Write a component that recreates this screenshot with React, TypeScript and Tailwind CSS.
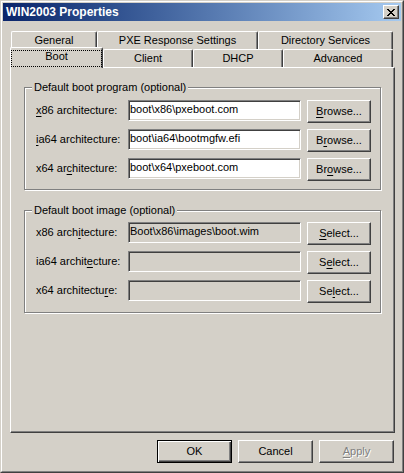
import React from "react";

// classic 3D edges
const raised =
  "border border-t-white border-l-white border-r-[#404040] border-b-[#404040] shadow-[inset_-1px_-1px_#808080]";
const sunken =
  "border border-t-[#808080] border-l-[#808080] border-r-white border-b-white shadow-[inset_1px_1px_#404040,inset_-1px_-1px_#d4d0c8]";

type Mnemonic = { text: string; at: number };

function Accel({ text, at }: Mnemonic) {
  return (
    <>
      {text.slice(0, at)}
      <span className="underline underline-offset-[2px]">{text[at]}</span>
      {text.slice(at + 1)}
    </>
  );
}

function CloseGlyph() {
  return (
    <svg width="8" height="7" viewBox="0 0 8 7" shapeRendering="crispEdges">
      <path
        d="M0 0h2v1H0zM6 0h2v1H6zM1 1h2v1H1zM5 1h2v1H5zM2 2h4v1H2zM3 3h2v1H3zM2 4h4v1H2zM1 5h2v1H1zM5 5h2v1H5zM0 6h2v1H0zM6 6h2v1H6z"
        fill="#000"
      />
    </svg>
  );
}

const backTabs = [
  { label: "General", w: "w-[86px]" },
  { label: "PXE Response Settings", w: "w-[161px]" },
  { label: "Directory Services", w: "w-[135px]" },
];

const frontTabs = [
  { label: "Client", w: "w-[90px]" },
  { label: "DHCP", w: "w-[90px]" },
  { label: "Advanced", w: "w-[110px]" },
];

function Tab({ label, w }: { label: string; w: string }) {
  return (
    <div
      className={`flex h-[18px] shrink-0 items-center justify-center rounded-t-[2px] border border-b-0 border-t-white border-l-white border-r-[#404040] leading-[13px] shadow-[inset_-1px_0_#808080] ${w}`}
    >
      {label}
    </div>
  );
}

type FieldRow = {
  label: Mnemonic;
  value: string;
  button: Mnemonic;
};

const programRows: FieldRow[] = [
  { label: { text: "x86 architecture:", at: 0 }, value: "boot\\x86\\pxeboot.com", button: { text: "Browse...", at: 0 } },
  { label: { text: "ia64 architecture:", at: 0 }, value: "boot\\ia64\\bootmgfw.efi", button: { text: "Browse...", at: 1 } },
  { label: { text: "x64 architecture:", at: 6 }, value: "boot\\x64\\pxeboot.com", button: { text: "Browse...", at: 2 } },
];

const imageRows: FieldRow[] = [
  { label: { text: "x86 architecture:", at: 8 }, value: "Boot\\x86\\images\\boot.wim", button: { text: "Select...", at: 0 } },
  { label: { text: "ia64 architecture:", at: 11 }, value: "", button: { text: "Select...", at: 1 } },
  { label: { text: "x64 architecture:", at: 14 }, value: "", button: { text: "Select...", at: 2 } },
];

function GroupBox({
  title,
  rows,
  readOnly,
  className,
}: {
  title: string;
  rows: FieldRow[];
  readOnly?: boolean;
  className: string;
}) {
  return (
    <div
      className={`relative ml-[13px] h-[103px] w-[357px] border border-[#808080] shadow-[inset_1px_1px_#fff,1px_1px_#fff] ${className}`}
    >
      <span className="absolute -top-[7px] left-[7px] bg-[#d4d0c8] px-[2px] leading-[13px]">
        {title}
      </span>
      <div className="flex flex-col gap-[6px] pl-[11px]">
        {rows.map((r) => (
          <div key={r.label.text} className="flex h-[23px] items-start">
            <label className="w-[92px] shrink-0 leading-[21px]">
              <Accel {...r.label} />
            </label>
            <input
              readOnly
              defaultValue={r.value}
              className={`h-[21px] w-[173px] pb-[3px] pl-[1px] text-[11px] leading-[13px] text-black outline-none ${sunken} ${
                readOnly ? "bg-[#d4d0c8]" : "bg-white"
              }`}
            />
            <button
              type="button"
              className={`ml-[6px] h-[23px] w-[64px] bg-[#d4d0c8] leading-[13px] ${raised}`}
            >
              <Accel {...r.button} />
            </button>
          </div>
        ))}
      </div>
    </div>
  );
}

export default function App() {
  return (
    <div className="h-[473px] w-[404px] border border-t-[#d4d0c8] border-l-[#d4d0c8] border-r-[#404040] border-b-[#404040] bg-[#d4d0c8] font-['Liberation_Sans',Arial,sans-serif] text-[11px] text-black">
      <div className="h-full border border-t-white border-l-white border-r-[#808080] border-b-[#808080] p-[1px]">
        {/* caption bar */}
        <div className="flex h-[18px] items-center bg-linear-to-r from-[#0a246a] to-[#a6caf0] pl-[3px] pr-[2px]">
          <span className="text-[12px] font-bold leading-none text-white">WIN2003 Properties</span>
          <button
            type="button"
            className={`ml-auto flex h-[14px] w-[16px] items-center justify-center bg-[#d4d0c8] ${raised}`}
          >
            <CloseGlyph />
          </button>
        </div>

        <div className="px-[7px]">
          {/* tab strip, two rows */}
          <div className="mt-[10px] flex pl-[1px]">
            {backTabs.map((t) => (
              <Tab key={t.label} {...t} />
            ))}
          </div>
          <div className="flex h-[18px] items-end">
            <div className="relative z-10 -mb-[1px] h-[21px] w-[93px] shrink-0 rounded-t-[2px] border border-b-0 border-t-white border-l-white border-r-[#404040] bg-[#d4d0c8] pt-[2px] shadow-[inset_-1px_0_#808080]">
              <div className="flex h-[17px] w-[91px] justify-center border border-dotted border-black leading-[11px]">
                Boot
              </div>
            </div>
            {frontTabs.map((t) => (
              <Tab key={t.label} {...t} />
            ))}
          </div>

          {/* tab page */}
          <div className="h-[366px] w-[385px] border border-t-white border-l-white border-r-[#404040] border-b-[#404040] shadow-[inset_-1px_-1px_#808080]">
            <GroupBox
              title="Default boot program (optional)"
              rows={programRows}
              className="mt-[19px] pt-[12px]"
            />
            <GroupBox
              title="Default boot image (optional)"
              rows={imageRows}
              readOnly
              className="mt-[20px] pt-[11px]"
            />
          </div>

          {/* dialog buttons */}
          <div className="mt-[7px] flex justify-end gap-[6px]">
            <button
              type="button"
              className="h-[23px] w-[75px] border border-black bg-[#d4d0c8] leading-[13px] shadow-[inset_1px_1px_#fff,inset_-1px_-1px_#404040,inset_-2px_-2px_#808080]"
            >
              OK
            </button>
            <button type="button" className={`h-[23px] w-[75px] bg-[#d4d0c8] leading-[13px] ${raised}`}>
              Cancel
            </button>
            <button
              type="button"
              disabled
              className={`h-[23px] w-[75px] bg-[#d4d0c8] leading-[13px] text-[#808080] [text-shadow:1px_1px_0_#fff] ${raised}`}
            >
              <Accel text="Apply" at={0} />
            </button>
          </div>
        </div>
      </div>
    </div>
  );
}
